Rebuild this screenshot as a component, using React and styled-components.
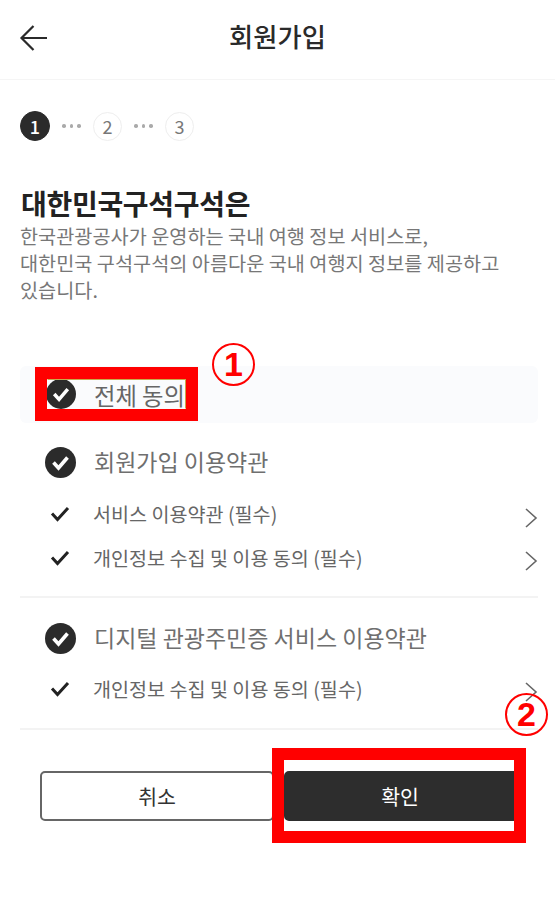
import React from 'react'
import styled, { createGlobalStyle } from 'styled-components'

const GlobalStyle = createGlobalStyle`
  html, body {
    margin: 0;
    padding: 0;
    background: #fff;
  }
  * {
    box-sizing: border-box;
  }
`

const Page = styled.div`
  width: 555px;
  height: 912px;
  overflow: hidden;
  background: #fff;
  color: #222;
  font-family: "Noto Sans CJK KR", "Noto Sans", sans-serif;
`

const Header = styled.header`
  position: relative;
  display: flex;
  align-items: center;
  justify-content: center;
  height: 80px;
  padding-bottom: 9px;
  border-bottom: 1px solid #f5f5f5;
`

const BackButton = styled.div`
  position: absolute;
  left: 19px;
  top: 24px;
  line-height: 0;
`

const Title = styled.h1`
  margin: 0;
  font-size: 26.3px;
  font-weight: 500;
  color: #2a2a2a;
`

const Main = styled.main`
  padding: 31px 17px 0 20px;
`

const Stepper = styled.div`
  display: flex;
  align-items: center;
  height: 30px;
`

const Step = styled.div`
  display: flex;
  align-items: center;
  justify-content: center;
  width: ${(p) => (p.$active ? 30 : 29)}px;
  height: ${(p) => (p.$active ? 30 : 29)}px;
  border-radius: 50%;
  border: 1px solid ${(p) => (p.$active ? '#2b2b2b' : '#eeeeee')};
  background: ${(p) => (p.$active ? '#2b2b2b' : '#fff')};
  color: ${(p) => (p.$active ? '#fff' : '#777')};
  font-size: 18px;
  font-weight: ${(p) => (p.$active ? 500 : 400)};
`

const StepDots = styled.div`
  display: flex;
  justify-content: center;
  gap: 4px;
  width: 43px;
  span {
    width: 3.5px;
    height: 3.5px;
    border-radius: 50%;
    background: #aaa;
  }
`

const Heading = styled.h2`
  margin: 45px 0 0 1px;
  font-size: 28px;
  line-height: 34px;
  font-weight: 700;
  letter-spacing: -0.3px;
  color: #222;
`

const Description = styled.p`
  margin: 2px 0 0 0;
  font-size: 19.7px;
  line-height: 27px;
  color: #777;
`

const AgreeAll = styled.div`
  position: relative;
  display: flex;
  align-items: center;
  gap: 18px;
  height: 57px;
  margin-top: 63px;
  padding: 0 0 1px 26px;
  background: #fafbfd;
  border-radius: 6px;
`

const RedFrame = styled.div`
  position: absolute;
  left: ${(p) => p.$left}px;
  top: ${(p) => p.$top}px;
  width: ${(p) => p.$width}px;
  height: ${(p) => p.$height}px;
  border: 12px solid #ff0000;
  pointer-events: none;
`

const CircleMark = styled.div`
  position: absolute;
  left: ${(p) => p.$left}px;
  top: ${(p) => p.$top}px;
  display: flex;
  align-items: center;
  justify-content: center;
  width: 43px;
  height: 43px;
  border: 2.5px solid #ff0000;
  border-radius: 50%;
  background: transparent;
  color: #ff0000;
  font-family: "Liberation Sans", sans-serif;
  font-size: 34px;
  font-weight: 700;
`

const Highlight = styled.div`
  position: absolute;
  left: 27px;
  top: 13px;
  width: 139px;
  height: 30px;
  border: 1.5px solid #c9a94a;
  border-left-color: transparent;
  border-bottom-color: transparent;
  pointer-events: none;
`

const Group = styled.section`
  padding-top: ${(p) => p.$top}px;
  padding-bottom: ${(p) => p.$bottom}px;
  border-bottom: 2px solid #f3f3f3;
`

const MainRow = styled.div`
  display: flex;
  align-items: center;
  gap: 18px;
  height: 40px;
  margin-bottom: ${(p) => p.$gap}px;
  padding-left: 25px;
  font-size: 23px;
  color: #6f6f6f;
`

const MainLabel = styled.span`
  margin-bottom: 2px;
`

const SubRow = styled.div`
  display: flex;
  align-items: center;
  height: 44px;
  padding-left: 30px;
  font-size: 19.6px;
  color: #666;
`

const SubLabel = styled.span`
  flex: 1;
  margin: 0 0 2px 23px;
`

const AllLabel = styled.span`
  margin-top: 2px;
  font-size: 23.3px;
  color: #666;
`

const Chevron = styled.div`
  line-height: 0;
  margin-top: ${(p) => p.$offset}px;
`

const Buttons = styled.div`
  position: relative;
  display: flex;
  gap: 10px;
  margin: 41px 0 0 20px;
`

const Button = styled.button`
  height: 50px;
  width: ${(p) => (p.$primary ? 238 : 234)}px;
  padding: 0 ${(p) => (p.$primary ? 6 : 0)}px 0 0;
  border: 2px solid ${(p) => (p.$primary ? '#2d2d2d' : '#666')};
  border-radius: 5px;
  background: ${(p) => (p.$primary ? '#2d2d2d' : '#fff')};
  color: ${(p) => (p.$primary ? '#fff' : '#333')};
  font-family: inherit;
  font-size: 20.5px;
  font-weight: 400;
`

const CheckCircle = ({ size = 31 }) => (
  <svg width={size} height={size} viewBox="0 0 31 31">
    <circle cx="15.5" cy="15.5" r="15.5" fill="#2b2b2b" />
    <path d="M8.5 15.5 L13.5 21 L22.5 10.5" fill="none" stroke="#fff" strokeWidth="3.6" />
  </svg>
)

const SmallCheck = () => (
  <svg width="20" height="16" viewBox="0 0 20 16">
    <path d="M2 7.5 L7.5 13.5 L18 2" fill="none" stroke="#222" strokeWidth="3" />
  </svg>
)

const ChevronIcon = () => (
  <svg width="14" height="22" viewBox="0 0 14 22">
    <path d="M2 2 L12 11 L2 20" fill="none" stroke="#666" strokeWidth="1.6" />
  </svg>
)

const App = () => {
  return (
    <Page>
      <GlobalStyle />
      <Header>
        <BackButton>
          <svg width="30" height="28" viewBox="0 0 30 28">
            <path d="M28 14 H3 M14.5 2 L2.5 14 L14.5 26" fill="none" stroke="#2a2a2a" strokeWidth="2.2" />
          </svg>
        </BackButton>
        <Title>회원가입</Title>
      </Header>

      <Main>
        <Stepper>
          <Step $active>1</Step>
          <StepDots><span /><span /><span /></StepDots>
          <Step>2</Step>
          <StepDots><span /><span /><span /></StepDots>
          <Step>3</Step>
        </Stepper>

        <Heading>대한민국구석구석은</Heading>
        <Description>
          한국관광공사가 운영하는 국내 여행 정보 서비스로,<br />
          대한민국 구석구석의 아름다운 국내 여행지 정보를 제공하고<br />
          있습니다.
        </Description>

        <AgreeAll>
          <CheckCircle size={30} />
          <AllLabel>전체 동의</AllLabel>
          <Highlight />
          <RedFrame $left={15} $top={1} $width={163} $height={54} />
          <CircleMark $left={192} $top={-23}>1</CircleMark>
        </AgreeAll>

        <Group $top={19} $bottom={16}>
          <MainRow $gap={10}><CheckCircle /><MainLabel>회원가입 이용약관</MainLabel></MainRow>
          <SubRow>
            <SmallCheck />
            <SubLabel>서비스 이용약관 (필수)</SubLabel>
            <Chevron $offset={8}><ChevronIcon /></Chevron>
          </SubRow>
          <SubRow>
            <SmallCheck />
            <SubLabel>개인정보 수집 및 이용 동의 (필수)</SubLabel>
            <Chevron $offset={6}><ChevronIcon /></Chevron>
          </SubRow>
        </Group>

        <Group $top={20} $bottom={17}>
          <MainRow $gap={9}><CheckCircle /><MainLabel>디지털 관광주민증 서비스 이용약관</MainLabel></MainRow>
          <SubRow>
            <SmallCheck />
            <SubLabel>개인정보 수집 및 이용 동의 (필수)</SubLabel>
            <Chevron $offset={6}><ChevronIcon /></Chevron>
          </SubRow>
        </Group>

        <Buttons>
          <Button>취소</Button>
          <Button $primary>확인</Button>
          <RedFrame $left={232} $top={-23} $width={254} $height={95} />
          <CircleMark $left={465} $top={-78}>2</CircleMark>
        </Buttons>
      </Main>
    </Page>
  )
}

export default App
